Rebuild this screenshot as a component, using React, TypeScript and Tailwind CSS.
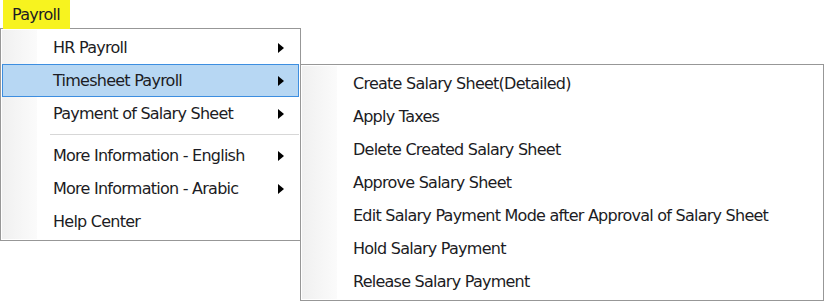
import React from "react";

type Item = { label: string; sub?: boolean; active?: boolean; separator?: boolean };

const mainItems: Item[] = [
  { label: "HR Payroll", sub: true },
  { label: "Timesheet Payroll", sub: true, active: true },
  { label: "Payment of Salary Sheet", sub: true },
  { label: "", separator: true },
  { label: "More Information - English", sub: true },
  { label: "More Information - Arabic", sub: true },
  { label: "Help Center" },
];

const subItems: Item[] = [
  { label: "Create Salary Sheet(Detailed)" },
  { label: "Apply Taxes" },
  { label: "Delete Created Salary Sheet" },
  { label: "Approve Salary Sheet" },
  { label: "Edit Salary Payment Mode after Approval of Salary Sheet" },
  { label: "Hold Salary Payment" },
  { label: "Release Salary Payment" },
];

function Arrow() {
  return (
    <svg width="6" height="10" viewBox="0 0 6 10" className="shrink-0">
      <path d="M0 0 L6 5 L0 10 Z" fill="#000" />
    </svg>
  );
}

function MenuRow({ item }: { item: Item }) {
  if (item.separator) {
    return (
      <div className="h-[9px] flex items-center pl-[48px]">
        <div className="h-px w-full bg-[#d7d7d7]" />
      </div>
    );
  }
  return (
    <div
      className={
        "h-[33px] flex items-center pl-[50px] pr-[14px] border " +
        (item.active ? "bg-[#b7d7f3] border-[#3d8ee0]" : "border-transparent")
      }
    >
      <span className="flex-1 whitespace-nowrap">{item.label}</span>
      {item.sub && <Arrow />}
    </div>
  );
}

export default function App() {
  return (
    <div
      className="relative w-[825px] h-[301px] bg-white text-[16px] tracking-[-0.75px] text-[#1c1c24]"
      style={{ fontFamily: "Tahoma, 'DejaVu Sans', 'Liberation Sans', sans-serif" }}
    >
      {/* menu bar tab */}
      <div className="absolute left-[3px] top-0 z-20 w-[67px] h-[29px] bg-[#f7f31f] flex items-center pl-[9px]">
        Payroll
      </div>

      {/* main dropdown */}
      <div className="absolute left-0 top-[28px] z-10 w-[301px] h-[213px] border border-[#979797] bg-white p-px">
        <div className="relative h-full">
          <div className="absolute left-0 top-0 bottom-0 w-[35px] bg-gradient-to-r from-[#f0f0f0] to-[#fbfbfb]" />
          <div className="relative pt-px">
            {mainItems.map((it, i) => (
              <MenuRow key={i} item={it} />
            ))}
          </div>
        </div>
      </div>

      {/* submenu */}
      <div className="absolute left-[300px] top-[64px] z-30 w-[524px] h-[237px] border border-[#979797] bg-white p-px">
        <div className="relative h-full">
          <div className="absolute left-0 top-0 bottom-0 w-[35px] bg-gradient-to-r from-[#f0f0f0] to-[#fbfbfb]" />
          <div className="relative pt-px">
            {subItems.map((it, i) => (
              <MenuRow key={i} item={it} />
            ))}
          </div>
        </div>
      </div>
    </div>
  );
}
